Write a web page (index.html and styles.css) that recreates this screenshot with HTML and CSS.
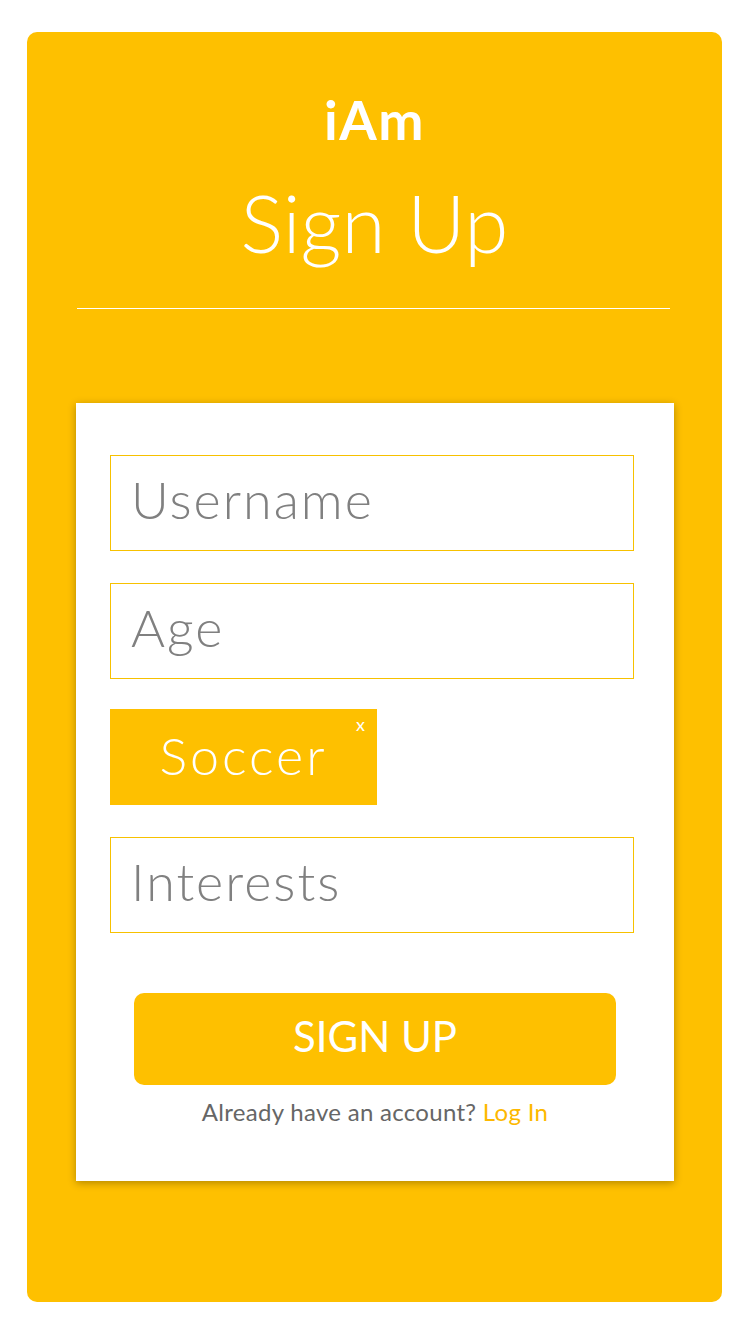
FILE: index.html
```html
<!DOCTYPE html>
<html lang="en">
<head>
  <meta charset="UTF-8">
  <title>iAm - Sign Up</title>
  <link rel="stylesheet" href="styles.css">
</head>
<body>

  <div class="card">
    <div class="header">
      <div class="brand">iAm</div>
      <h1>Sign Up</h1>
      <hr>
    </div>

    <form class="box">
      <input class="field" type="text" placeholder="Username">
      <input class="field field-short" type="text" placeholder="Age">

      <!-- tags that were added -->
      <div class="tags">
        <span class="tag">Soccer<span class="close">x</span></span>
      </div>

      <input class="field" type="text" placeholder="Interests">

      <button type="button" class="signup">SIGN UP</button>
      <p class="login">Already have an account? <a href="#">Log In</a></p>
    </form>
  </div>

</body>
</html>
```

FILE: styles.css
```css
body {
  margin: 0;
  padding: 32px 28px 32px 27px;
  font-family: "Lato", "Open Sans", sans-serif;
  background: white;
}
.card {
  background: #fec000;
  border-radius: 10px;
  height: 1270px;
  box-sizing: border-box;
  padding-top: 60px;
}
.header {
  text-align: center;
  color: white;
}
.brand {
  font-size: 54px;
  font-weight: 700;
  line-height: 56px;
  letter-spacing: 1.5px;
}
h1 {
  margin: 26px 0 0;
  font-size: 80px;
  font-weight: 300;
  line-height: 96px;
}
hr {
  margin: 38px 52px 0 50px;
  border: none;
  border-top: 1px solid white;
}
.box {
  margin: 94px 48px 0 49px;
  background: white;
  box-shadow: 0 2px 8px rgba(0, 0, 0, 0.3);
  padding: 52px 0 0;
  height: 778px;
  box-sizing: border-box;
}
.field {
  display: block;
  box-sizing: border-box;
  width: 524px;
  height: 96px;
  margin: 0 0 32px 34px;
  padding: 0 20px 8px;
  border: 1px solid #f7c100;
  font-family: inherit;
  font-size: 52px;
  font-weight: 300;
  letter-spacing: 2px;
  color: #808080;
  outline: none;
}
.field::placeholder {
  color: #808080;
}
.field-short {
  margin-bottom: 30px;
}
.tags {
  margin: 0 0 32px 34px;
  display: flex;
}
.tag {
  position: relative;
  width: 267px;
  height: 96px;
  background: #fec000;
  color: white;
  font-size: 52px;
  font-weight: 300;
  letter-spacing: 3px;
  display: flex;
  align-items: center;
  justify-content: center;
  padding: 0 0 4px;
  box-sizing: border-box;
}
.close {
  position: absolute;
  top: 4px;
  right: 12px;
  font-size: 18px;
  font-weight: 400;
  letter-spacing: 0;
}
.signup {
  display: block;
  width: 482px;
  height: 92px;
  margin: 60px auto 0;
  padding: 0 0 6px;
  background: #fec000;
  border: none;
  border-radius: 10px;
  color: white;
  font-family: inherit;
  font-size: 42px;
  font-weight: 400;
}
.login {
  margin: 12px 0 0;
  text-align: center;
  font-size: 24px;
  letter-spacing: 0.3px;
  color: #666;
}
.login a {
  color: #fdb800;
  text-decoration: none;
}
```
